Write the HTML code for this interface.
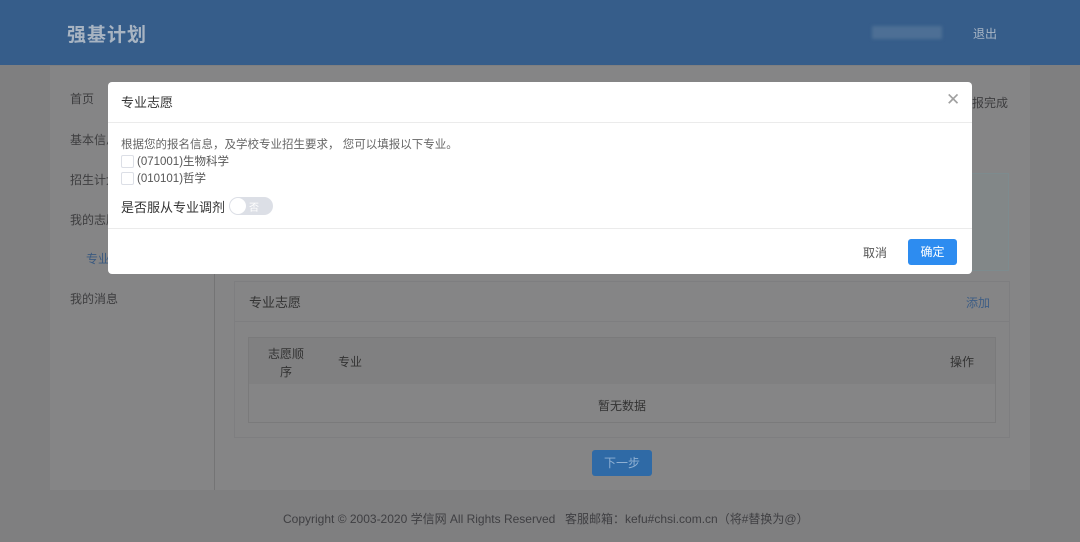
<!DOCTYPE html>
<html><head><meta charset="utf-8"><style>
*{margin:0;padding:0;box-sizing:border-box}
body{width:1080px;height:542px;overflow:hidden;background:#7f7f80;font-family:"Liberation Sans","Noto Sans CJK SC",sans-serif;position:relative}
.a{position:absolute}
.hd{left:0;top:0;width:1080px;height:65px;background:#365d8a}
.card{left:50px;top:66px;width:980px;height:424px;background:#858586}
.side{font-size:12px;color:#3d3d3f}
</style></head><body>
<div class="a hd"></div>
<div class="a" style="left:67px;top:20px;font-size:19px;font-weight:bold;color:#a8b4c2;letter-spacing:1px">强基计划</div>
<div class="a" style="left:872px;top:26px;width:70px;height:13px;background:#4d6f95;filter:blur(1.5px)"></div>
<div class="a" style="left:973px;top:25px;font-size:12px;color:#a9b6c5">退出</div>
<div class="a card"></div>
<div class="a" style="left:214px;top:270px;width:1px;height:220px;background:#747475"></div>
<div class="a side" style="left:70px;top:90px">首页</div>
<div class="a side" style="left:70px;top:131px">基本信息</div>
<div class="a side" style="left:70px;top:171px">招生计划</div>
<div class="a side" style="left:70px;top:211px">我的志愿</div>
<div class="a side" style="left:86px;top:250px;color:#3b5a80">专业志愿</div>
<div class="a side" style="left:70px;top:290px">我的消息</div>
<div class="a side" style="left:972px;top:94px">报完成</div>
<div class="a" style="left:940px;top:173px;width:69px;height:98px;border:1px solid #7d8b8e;background:#828788"></div>
<div class="a" style="left:234px;top:281px;width:776px;height:157px;border:1px solid #7e7e80"></div>
<div class="a" style="left:234px;top:321px;width:776px;height:1px;background:#7e7e80"></div>
<div class="a" style="left:249px;top:292px;font-size:13px;color:#333">专业志愿</div>
<div class="a" style="left:966px;top:294px;font-size:12px;color:#3e5e85">添加</div>
<div class="a" style="left:248px;top:337px;width:748px;height:86px;border:1px solid #7a7a7b"></div>
<div class="a" style="left:249px;top:338px;width:746px;height:46px;background:#808081"></div>
<div class="a" style="left:266px;top:345px;font-size:12px;color:#333;line-height:18px;text-align:center;width:40px">志愿顺<br>序</div>
<div class="a" style="left:338px;top:353px;font-size:12px;color:#333">专业</div>
<div class="a" style="left:950px;top:353px;font-size:12px;color:#333">操作</div>
<div class="a" style="left:598px;top:397px;font-size:12px;color:#333">暂无数据</div>
<div class="a" style="left:592px;top:450px;width:60px;height:26px;background:#2f6aa6;border-radius:3px;color:#8fb0d3;font-size:12px;text-align:center;line-height:26px">下一步</div>
<div class="a" style="left:283px;top:510px;font-size:12px;color:#3f3f42">Copyright © 2003-2020 学信网 All Rights Reserved</div>
<div class="a" style="left:565px;top:510px;font-size:12px;color:#3f3f42">客服邮箱：kefu#chsi.com.cn（将#替换为@）</div>

<div class="a" style="left:108px;top:82px;width:864px;height:192px;background:#fff;border-radius:4px">
<div class="a" style="left:13px;top:10px;font-size:13px;color:#333">专业志愿</div>
<div class="a" style="left:838px;top:8px;font-size:17px;color:#a0a0a0;font-weight:300">✕</div>
<div class="a" style="left:0;top:40px;width:864px;height:1px;background:#ebebeb"></div>
<div class="a" style="left:13px;top:54px;font-size:11.5px;color:#666">根据您的报名信息，及学校专业招生要求， 您可以填报以下专业。</div>
<div class="a" style="left:13px;top:73px;width:13px;height:13px;border:1px solid #dcdfe6;border-radius:2px"></div>
<div class="a" style="left:29px;top:71px;font-size:11.5px;color:#555">(071001)生物科学</div>
<div class="a" style="left:13px;top:90px;width:13px;height:13px;border:1px solid #dcdfe6;border-radius:2px"></div>
<div class="a" style="left:29px;top:88px;font-size:11.5px;color:#555">(010101)哲学</div>
<div class="a" style="left:13px;top:115px;font-size:13px;color:#333">是否服从专业调剂</div>
<div class="a" style="left:121px;top:115px;width:44px;height:18px;background:#dcdfe6;border-radius:9px"></div>
<div class="a" style="left:122px;top:116px;width:16px;height:16px;background:#fff;border-radius:50%"></div>
<div class="a" style="left:141px;top:117px;font-size:10px;color:#fff">否</div>
<div class="a" style="left:0;top:146px;width:864px;height:1px;background:#ebebeb"></div>
<div class="a" style="left:755px;top:162px;font-size:12px;color:#555">取消</div>
<div class="a" style="left:800px;top:157px;width:49px;height:26px;background:#2d8cf0;border-radius:3px;color:#fff;font-size:12px;text-align:center;line-height:26px">确定</div>
</div>
</body></html>
